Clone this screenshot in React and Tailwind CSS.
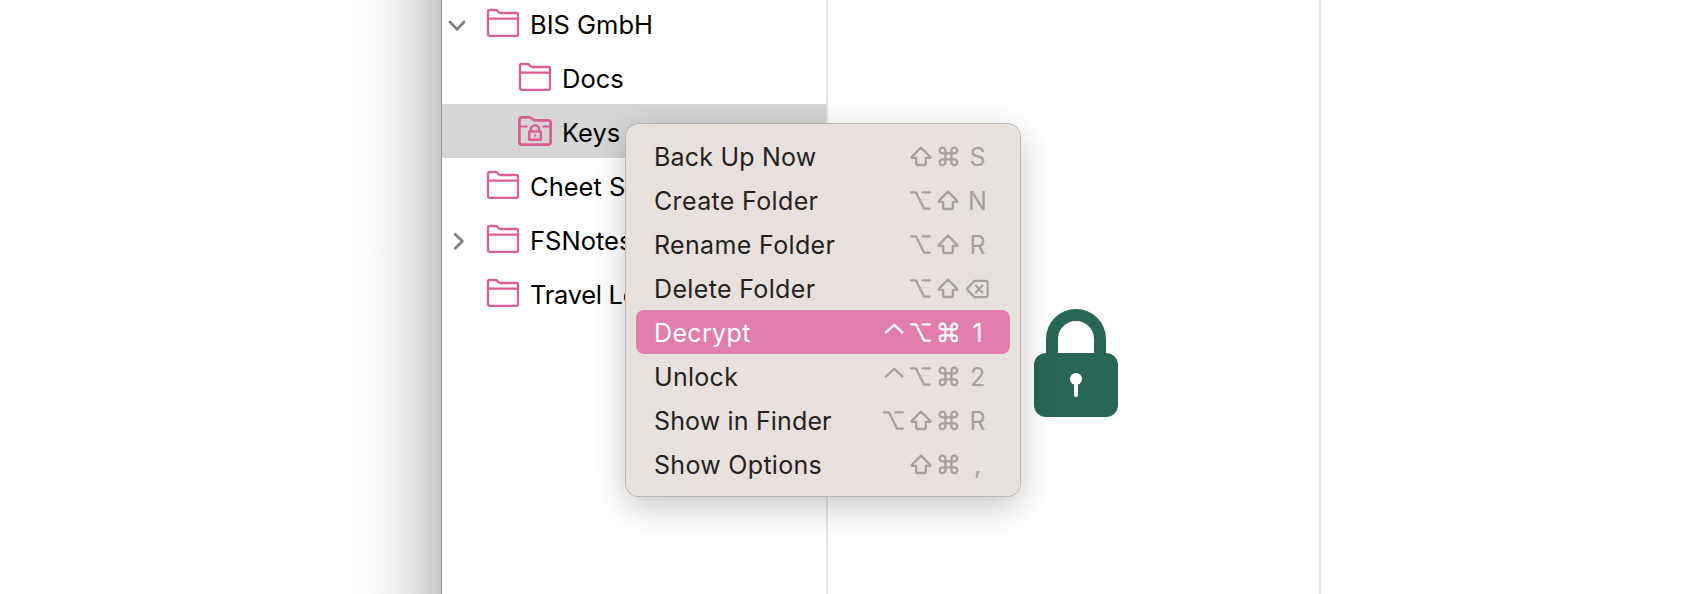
const SHIFT = 'shift', CMD = 'cmd', OPT = 'opt', CTRL = 'ctrl';

const menuItems = [
  { label: 'Back Up Now', keys: [SHIFT, CMD], last: 'S', track: 'tracking-[0.2px]' },
  { label: 'Create Folder', keys: [OPT, SHIFT], last: 'N', track: 'tracking-[0.35px]' },
  { label: 'Rename Folder', keys: [OPT, SHIFT], last: 'R', track: 'tracking-[0.35px]' },
  { label: 'Delete Folder', keys: [OPT, SHIFT], last: 'delete', track: 'tracking-[0.35px]' },
  { label: 'Decrypt', keys: [CTRL, OPT, CMD], last: '1', active: true, track: 'tracking-[0.35px]' },
  { label: 'Unlock', keys: [CTRL, OPT, CMD], last: '2', track: 'tracking-[0.3px]' },
  { label: 'Show in Finder', keys: [OPT, SHIFT, CMD], last: 'R', track: 'tracking-[0.15px]' },
  { label: 'Show Options', keys: [SHIFT, CMD], last: ',', track: 'tracking-[0.3px]' },
];

const keyPaths = {
  shift: 'M12 3.6 L21.4 13 Q21.8 13.8 20.8 13.8 H16.8 V20 Q16.8 21 15.8 21 H8.2 Q7.2 21 7.2 20 V13.8 H3.2 Q2.2 13.8 2.6 13 Z',
  cmd: 'M9.4 9.4 H15.4 V15.4 H9.4 Z M9.4 9.4 H6.6 A2.9 2.9 0 1 1 9.4 6.6 Z M15.4 9.4 V6.6 A2.9 2.9 0 1 1 18.2 9.4 Z M15.4 15.4 H18.2 A2.9 2.9 0 1 1 15.4 18.2 Z M9.4 15.4 V18.2 A2.9 2.9 0 1 1 6.6 15.4 Z',
  opt: 'M2 4.4 H7 L15 20.6 H20.8 M13.6 4.4 H20.8',
  ctrl: 'M4 12.4 L12.2 4.8 L20.4 12.4',
};

function KeyGlyph({ name }) {
  return (
    <span className="flex w-[27px] justify-center">
      <svg width="24" height="24" viewBox="0 0 24 24" fill="none" stroke="currentColor" strokeWidth="2.3" strokeLinecap="round" strokeLinejoin="round">
        <path d={keyPaths[name]} />
      </svg>
    </span>
  );
}

function DeleteGlyph() {
  return (
    <svg width="24" height="24" viewBox="0 0 24 24" fill="none" stroke="currentColor" strokeWidth="2.2" strokeLinecap="round" strokeLinejoin="round">
      <path d="M8.2 3.9 H19.4 Q21.7 3.9 21.7 6.2 V17.8 Q21.7 20.1 19.4 20.1 H8.2 L1.6 13 Q.9 12 1.6 11 Z" />
      <path d="M9.8 8.6 L16.4 15.4 M16.4 8.6 L9.8 15.4" />
    </svg>
  );
}

function Folder({ locked }) {
  return (
    <svg className="shrink-0" width="34" height="30" viewBox="0 0 34 30" fill="none" stroke="#dc5f94" strokeWidth="2.3" strokeLinejoin="round" strokeLinecap="round">
      {locked ? (
        <>
          <path d="M1.4 26 V4 Q1.4 1.4 4 1.4 H11 Q13 1.4 14 2.8 T17 4.4 H30 Q32.6 4.4 32.6 7 V26 Q32.6 28.6 30 28.6 H4 Q1.4 28.6 1.4 26 Z" strokeWidth="2.8" />
          <path d="M2 10.4 H8.8 M25.2 10.4 H32" strokeWidth="2" />
          <path d="M11.2 15.4 H22.8 V23.8 H11.2 Z M12.9 15.2 V13.4 A4.1 4.1 0 0 1 21.1 13.4 V15.2" strokeWidth="2.5" />
          <path d="M16.4 17.4 L18.6 19.4 L16.4 21.4 Z" fill="#dc5f94" stroke="none" />
        </>
      ) : (
        <>
          <path d="M2 26.2 V3.6 Q2 2 3.6 2 H9.6 Q11.2 2 11.8 3.4 T14.2 5 H30.4 Q32 5 32 6.6 V26.2 Q32 27.8 30.4 27.8 H3.6 Q2 27.8 2 26.2 Z" />
          <path d="M2 10.6 H32" />
        </>
      )}
    </svg>
  );
}

function Chevron({ open }) {
  return (
    <svg width="20" height="20" viewBox="0 0 20 20" fill="none" stroke="#808080" strokeWidth="2.8" strokeLinecap="round" strokeLinejoin="round">
      <path d={open ? 'M3 7 L10 14.4 L17 7' : 'M8.2 3.2 L15.4 10.2 L8.2 17.2'} />
    </svg>
  );
}

function SidebarRow({ label, chevron, nested, locked, selected, track = '' }) {
  return (
    <div className={`flex h-[54px] shrink-0 items-center ${selected ? 'bg-[#d6d6d6]' : ''}`}>
      <span className={`flex h-full shrink-0 items-center pl-[5px] pt-1 ${nested ? 'w-[76px]' : 'w-[44px]'}`}>
        {chevron && <Chevron open={chevron === 'open'} />}
      </span>
      <Folder locked={locked} />
      <span className={`whitespace-nowrap pl-[10px] pt-[3px] text-[25.5px] leading-8 text-black ${track}`}>{label}</span>
    </div>
  );
}

function Padlock() {
  return (
    <svg width="84" height="108" viewBox="0 0 84 108">
      <path d="M18 52 V30 A24 24 0 0 1 66 30 V52" fill="none" stroke="#296655" strokeWidth="12" />
      <rect y="44" width="84" height="64" rx="12" fill="#296655" />
      <circle cx="42" cy="70" r="6" fill="#fff" />
      <path d="M42 70 V86" stroke="#fff" strokeWidth="4" strokeLinecap="round" />
    </svg>
  );
}

function ContextMenu() {
  return (
    <div className="absolute left-[626px] top-[124px] w-[394px] rounded-[13px] bg-linear-to-r from-[#e7e1dd] via-[#e8e0de] to-[#e7e1de] p-[10px] shadow-[0_0_0_1px_#b8b5b3,0_10px_34px_rgba(0,0,0,0.24)]">
      {menuItems.map((item) => (
        <div key={item.label} className={`flex h-11 items-center justify-between rounded-lg pl-[18px] pr-[18px] ${item.active ? 'bg-[#e27eae] text-white' : 'text-[#262220]'}`}>
          <span className={`whitespace-nowrap pt-px text-[25px] leading-8 ${item.track}`}>{item.label}</span>
          <span className={`flex items-center ${item.active ? 'text-white' : 'text-[#a6a09e]'}`}>
            {item.keys.map((k) => <KeyGlyph key={k} name={k} />)}
            <span className="ml-[3px] flex w-7 items-center justify-center pr-px pt-px text-[25px] leading-8">
              {item.last === 'delete' ? <DeleteGlyph /> : item.last}
            </span>
          </span>
        </div>
      ))}
    </div>
  );
}

export default function App() {
  return (
    <div className="relative flex h-[594px] w-[1704px] overflow-hidden bg-white font-['Inter',sans-serif]">
      <div className="w-[442px] shrink-0 border-r border-[#969696] bg-[linear-gradient(to_right,#fff_340px,#fbfbfb_365px,#f3f3f3_390px,#e8e8e8_407px,#d8d8d8_424px,#c6c6c6_441px)]" />
      <aside className="-mt-1 flex w-[384px] shrink-0 flex-col">
        <SidebarRow label="BIS GmbH" chevron="open" />
        <SidebarRow label="Docs" nested />
        <SidebarRow label="Keys" nested locked selected />
        <SidebarRow label="Cheet S" />
        <SidebarRow label="FSNotes" chevron="closed" />
        <SidebarRow label="Travel Lo" track="tracking-[-0.3px]" />
      </aside>
      <section className="w-[495px] shrink-0 border-x-2 border-[#e4e4e6] pl-[206px] pt-[309px]">
        <Padlock />
      </section>
      <main className="flex-1" />
      <ContextMenu />
    </div>
  );
}
